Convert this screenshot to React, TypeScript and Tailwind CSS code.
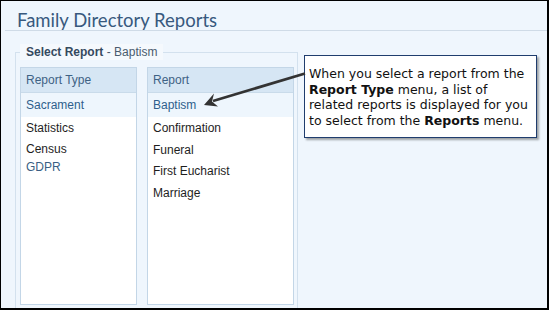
const ui = { fontFamily: '"Liberation Sans", Arial, sans-serif' };
const callout = { fontFamily: '"DejaVu Sans", Verdana, sans-serif' };

const reportTypes = ["Sacrament", "Statistics"];
const reports = ["Baptism", "Confirmation", "Funeral", "First Eucharist", "Marriage"];

function PanelHeader({ label }: { label: string }) {
  return (
    <div className="h-[25px] flex items-center px-[5px] bg-[#d6e6f4] text-[#3e6284] border-b border-[#c9dbea]">
      {label}
    </div>
  );
}

function Row({ label, selected, first }: { label: string; selected?: boolean; first?: boolean }) {
  return (
    <div
      className={`${first ? "h-[24px]" : "h-[21.75px]"} flex items-center px-[5px] ${
        selected ? "bg-[#eef6fd] text-[#2f5f8c]" : "text-[#1e1e1e]"
      }`}
    >
      {label}
    </div>
  );
}

export default function App() {
  return (
    <div
      className="relative w-[549px] h-[310px] overflow-hidden bg-[#eff6fd] border-l border-t border-r-2 border-b-2 border-black"
      style={ui}
    >
      <div className="ml-[4px] h-[30px] border-b border-[#cfdbe7] pl-[12px] pt-[10px]">
        <h1 className="text-[18.5px] leading-[19px] text-[#38597e]" style={{ fontFamily: "Lato, sans-serif" }}>
          Family Directory Reports
        </h1>
      </div>

      <div className="flex items-start mt-[13px]">
        <fieldset className="ml-[14px] w-[283px] h-[300px] border border-[#d3e1ee] pl-[4px] pr-[3px] pt-[7px]">
          <legend className="px-[6px] leading-[16px] text-[12px] bg-[#f5f9fd]">
            <span className="font-bold text-[#354a5f]">Select Report</span>
            <span className="text-[#4a5c6e]"> - Baptism</span>
          </legend>
          <div className="flex gap-[10px] text-[12px]">
            <div className="w-[117px] h-[238px] bg-white border border-[#c3d6e7]">
              <PanelHeader label="Report Type" />
              <Row label={reportTypes[0]} selected first />
              <Row label={reportTypes[1]} />
              <div className="px-[5px] pt-[1px] leading-[18px]">
                <div className="text-[#1e1e1e]">Census</div>
                <div className="text-[#3a5f84]">GDPR</div>
              </div>
            </div>
            <div className="w-[147px] h-[238px] bg-white border border-[#c3d6e7]">
              <PanelHeader label="Report" />
              {reports.map((r, i) => (
                <Row key={r} label={r} selected={i === 0} first={i === 0} />
              ))}
            </div>
          </div>
        </fieldset>

        <div
          className="ml-[6px] mt-[11px] w-[233px] bg-white border border-[#1f3d6e] shadow-[2px_2px_2px_rgba(0,0,0,0.35)] pl-[4px] pr-[2px] pt-[10px] pb-[9px] text-[12.5px] leading-[15.5px] text-[#111] whitespace-nowrap"
          style={callout}
        >
          When you select a report from the
          <br />
          <b>Report Type</b> menu, a list of
          <br />
          related reports is displayed for you
          <br />
          to select from the <b>Reports</b> menu.
        </div>
      </div>

      <svg className="absolute left-0 top-0 pointer-events-none" width="549" height="310">
        <line x1="304" y1="72.5" x2="212" y2="100" stroke="#333" strokeWidth="2.7" />
        <polygon points="203,104 213,92.5 211,100.5 217,105.5" fill="#333" />
      </svg>
    </div>
  );
}
